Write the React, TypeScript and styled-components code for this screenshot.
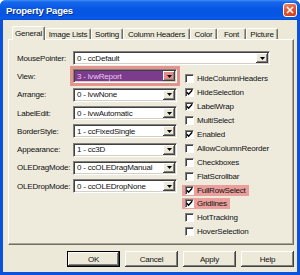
import React from "react";
import styled, { createGlobalStyle } from "styled-components";

const Global = createGlobalStyle`
  html, body { margin: 0; padding: 0; background: #ffffff; }
  body { font-family: "Liberation Sans", Arial, sans-serif; }
  #root { width: 300px; height: 275px; }
`;

const UI_FONT = `"Liberation Sans", Arial, sans-serif`;

const Window = styled.div`
  width: 300px;
  height: 275px;
  box-sizing: border-box;
  display: flex;
  flex-direction: column;
  background: #0b52dc;
  border-radius: 6px 6px 0 0;
  overflow: hidden;
`;

const TitleBar = styled.div`
  height: 20px;
  flex: none;
  display: flex;
  align-items: center;
  justify-content: space-between;
  padding: 0 3px 0 6px;
  background: linear-gradient(180deg, #3f8cf3 0%, #1566ec 12%, #0857e4 45%, #0554e2 75%, #0a5cec 92%, #0a48c8 100%);
`;

const Title = styled.span`
  color: #ffffff;
  font-family: "Liberation Sans", Arial, sans-serif;
  font-weight: bold;
  font-size: 9.5px;
  letter-spacing: -0.2px;
  text-shadow: 1px 1px 0 #0b2f8e;
`;

const CloseButton = styled.div`
  width: 14px;
  height: 14px;
  box-sizing: border-box;
  border: 1px solid #ffffff;
  border-radius: 3px;
  background: linear-gradient(160deg, #f0876a 0%, #e25a35 45%, #cf3d16 100%);
  display: flex;
  align-items: center;
  justify-content: center;
`;

const Body = styled.div`
  flex: 1;
  margin: 0 3px 3px 3px;
  background: #ece9d8;
  padding: 6px 3px 0 5px;
  display: flex;
  flex-direction: column;
  font-family: ${UI_FONT};
  font-size: 8px;
  letter-spacing: -0.2px;
  color: #111111;
`;

const TabRow = styled.div`
  height: 13px;
  display: flex;
  align-items: flex-end;
  padding-left: 4px;
`;

const Tab = styled.div<{ $w: number; $active?: boolean }>`
  width: ${(p) => p.$w}px;
  height: ${(p) => (p.$active ? 14 : 11)}px;
  margin-bottom: ${(p) => (p.$active ? -1 : 0)}px;
  position: relative;
  z-index: ${(p) => (p.$active ? 2 : 1)};
  box-sizing: border-box;
  display: flex;
  align-items: center;
  justify-content: center;
  padding-bottom: ${(p) => (p.$active ? 1 : 0)}px;
  background: ${(p) => (p.$active ? "#eeebdd" : "#ece9d8")};
  border-top: 1px solid #ffffff;
  border-left: 1px solid #ffffff;
  border-right: 1px solid #716f64;
  border-radius: 2px 2px 0 0;
  box-shadow: inset -1px 0 0 #aca899;
  white-space: nowrap;
`;

const Panel = styled.div`
  height: 206px;
  box-sizing: border-box;
  background: #eeebdd;
  border-top: 1px solid #ffffff;
  border-left: 1px solid #ffffff;
  border-right: 1px solid #716f64;
  border-bottom: 1px solid #716f64;
  box-shadow: inset -1px -1px 0 #aca899;
  padding: 9px 0 0 8px;
  display: flex;
  flex-direction: column;
`;

const FieldRow = styled.div`
  height: 18.3px;
  display: flex;
  align-items: center;
`;

const FieldLabel = styled.span`
  width: 56px;
  flex: none;
  white-space: nowrap;
`;

const Combo = styled.div<{ $w: number; $hl?: boolean }>`
  width: ${(p) => p.$w}px;
  height: 14px;
  box-sizing: border-box;
  display: flex;
  align-items: center;
  background: ${(p) => (p.$hl ? "#7c3b8c" : "#ffffff")};
  border: 1px solid;
  border-color: #808080 #ffffff #ffffff #808080;
  box-shadow: inset 1px 1px 0 #404040, inset -1px -1px 0 #d4d0c8;
  outline: ${(p) => (p.$hl ? "3px solid #e5948b" : "none")};
`;

const ComboText = styled.span<{ $hl?: boolean }>`
  flex: 1;
  padding-left: 3px;
  white-space: nowrap;
  overflow: hidden;
  color: ${(p) => (p.$hl ? "#e6c8ec" : "#111111")};
`;

const DropButton = styled.div<{ $hl?: boolean }>`
  width: 12px;
  height: 10px;
  flex: none;
  margin-right: 1px;
  box-sizing: border-box;
  background: ${(p) => (p.$hl ? "#e58c86" : "#ece9d8")};
  box-shadow: inset -1px -1px 0 #404040, inset 1px 1px 0 #ffffff, inset -2px -2px 0 #808080;
  display: flex;
  align-items: center;
  justify-content: center;
`;

const Columns = styled.div`
  display: flex;
`;

const LeftColumn = styled.div`
  width: 160px;
  flex: none;
  display: flex;
  flex-direction: column;
`;

const RightColumn = styled.div`
  margin-left: 8px;
  padding-top: 4.7px;
  display: flex;
  flex-direction: column;
`;

const CheckRow = styled.div`
  height: 13.9px;
  display: flex;
  align-items: center;
`;

const CheckItem = styled.div<{ $hl?: boolean }>`
  height: 11px;
  display: flex;
  align-items: center;
  gap: 3px;
  margin-left: -3px;
  padding: 0 3px 0 3px;
  background: ${(p) => (p.$hl ? "#eb9f9c" : "transparent")};
  white-space: nowrap;
`;

const Box = styled.div`
  width: 9px;
  height: 9px;
  box-sizing: border-box;
  background: #ffffff;
  border: 1px solid;
  border-color: #808080 #ffffff #ffffff #808080;
  box-shadow: inset 1px 1px 0 #404040;
  display: flex;
  align-items: center;
  justify-content: center;
`;

const ButtonRow = styled.div`
  margin-top: 6px;
  display: flex;
  justify-content: flex-end;
  gap: 5px;
`;

const Button = styled.div<{ $default?: boolean }>`
  width: 53px;
  height: 16px;
  box-sizing: border-box;
  display: flex;
  align-items: center;
  justify-content: center;
  background: #ece9d8;
  border: ${(p) => (p.$default ? "1px solid #000000" : "none")};
  box-shadow: inset -1px -1px 0 #404040, inset 1px 1px 0 #ffffff, inset -2px -2px 0 #808080;
`;

const Arrow = () => (
  <svg width="5" height="3" viewBox="0 0 5 3">
    <polygon points="0,0 5,0 2.5,3" fill="#000" />
  </svg>
);

const Check = () => (
  <svg width="7" height="7" viewBox="0 0 7 7">
    <polyline points="0.8,3.2 2.6,5.2 6.2,1.2" fill="none" stroke="#000" strokeWidth="1.4" />
  </svg>
);

const tabs: [string, number][] = [
  ["General", 33],
  ["Image Lists", 46],
  ["Sorting", 32],
  ["Column Headers", 67],
  ["Color", 27],
  ["Font", 29],
  ["Picture", 32],
];

const fields: { label: string; value: string; hl?: boolean }[] = [
  { label: "View:", value: "3 - lvwReport", hl: true },
  { label: "Arrange:", value: "0 - lvwNone" },
  { label: "LabelEdit:", value: "0 - lvwAutomatic" },
  { label: "BorderStyle:", value: "1 - ccFixedSingle" },
  { label: "Appearance:", value: "1 - cc3D" },
  { label: "OLEDragMode:", value: "0 - ccOLEDragManual" },
  { label: "OLEDropMode:", value: "0 - ccOLEDropNone" },
];

const checks: { label: string; on: boolean; hl?: boolean }[] = [
  { label: "HideColumnHeaders", on: false },
  { label: "HideSelection", on: true },
  { label: "LabelWrap", on: true },
  { label: "MultiSelect", on: false },
  { label: "Enabled", on: true },
  { label: "AllowColumnReorder", on: false },
  { label: "Checkboxes", on: false },
  { label: "FlatScrollbar", on: false },
  { label: "FullRowSelect", on: true, hl: true },
  { label: "Gridlines", on: true, hl: true },
  { label: "HotTracking", on: false },
  { label: "HoverSelection", on: false },
];

export default function App() {
  return (
    <>
      <Global />
      <Window>
        <TitleBar>
          <Title>Property Pages</Title>
          <CloseButton>
            <svg width="8" height="8" viewBox="0 0 8 8">
              <path d="M1 1 L7 7 M7 1 L1 7" stroke="#fff" strokeWidth="1.6" />
            </svg>
          </CloseButton>
        </TitleBar>
        <Body>
          <TabRow>
            {tabs.map(([t, w], i) => (
              <Tab key={t} $w={w} $active={i === 0}>
                {t}
              </Tab>
            ))}
          </TabRow>
          <Panel>
            <FieldRow>
              <FieldLabel>MousePointer:</FieldLabel>
              <Combo $w={197}>
                <ComboText>0 - ccDefault</ComboText>
                <DropButton>
                  <Arrow />
                </DropButton>
              </Combo>
            </FieldRow>
            <Columns>
              <LeftColumn>
                {fields.map((f) => (
                  <FieldRow key={f.label}>
                    <FieldLabel>{f.label}</FieldLabel>
                    <Combo $w={104} $hl={f.hl}>
                      <ComboText $hl={f.hl}>{f.value}</ComboText>
                      <DropButton $hl={f.hl}>
                        <Arrow />
                      </DropButton>
                    </Combo>
                  </FieldRow>
                ))}
              </LeftColumn>
              <RightColumn>
                {checks.map((c) => (
                  <CheckRow key={c.label}>
                    <CheckItem $hl={c.hl}>
                      <Box>{c.on && <Check />}</Box>
                      <span>{c.label}</span>
                    </CheckItem>
                  </CheckRow>
                ))}
              </RightColumn>
            </Columns>
          </Panel>
          <ButtonRow>
            <Button $default>OK</Button>
            <Button>Cancel</Button>
            <Button>Apply</Button>
            <Button>Help</Button>
          </ButtonRow>
        </Body>
      </Window>
    </>
  );
}
